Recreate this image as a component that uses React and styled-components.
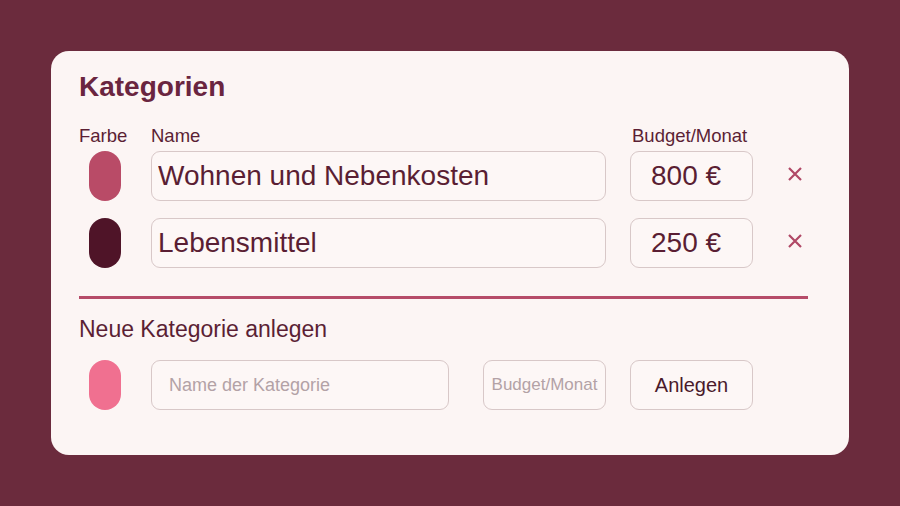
import React from "react";
import styled, { createGlobalStyle } from "styled-components";

const GlobalStyle = createGlobalStyle`
  html, body {
    margin: 0;
    padding: 0;
    background: #6b2b3d;
  }
  body {
    font-family: "Liberation Sans", Arial, sans-serif;
  }
  * { box-sizing: border-box; }
`;

const Page = styled.div`
  width: 900px;
  height: 506px;
  padding: 51px;
  background: #6b2b3d;
`;

const Card = styled.section`
  width: 798px;
  height: 404px;
  background: #fcf5f4;
  border-radius: 18px;
  padding: 20px 41px 0 28px;
  color: #5b1f34;
`;

const Title = styled.h1`
  margin: 0;
  font-size: 28px;
  line-height: 32px;
  font-weight: 700;
  color: #6a2540;
`;

const Grid = styled.div`
  display: grid;
  grid-template-columns: 48px 455px 123px 1fr;
  column-gap: 24px;
  align-items: center;
  margin-top: 22px;
`;

const Label = styled.div`
  font-size: 18.5px;
  line-height: 22px;
  color: #5b1f34;
  margin-bottom: 4px;
  padding-left: ${(p) => p.$indent || 0}px;
  white-space: nowrap;
`;

const RowGap = styled.div`
  grid-column: 1 / -1;
  height: 17px;
`;

const Swatch = styled.div`
  width: 32px;
  height: 50px;
  border-radius: 16px;
  margin-left: 10px;
  flex: none;
  background: ${(p) => p.$color};
`;

const Field = styled.input`
  display: block;
  width: ${(p) => p.$width || "100%"};
  height: 50px;
  border: 1px solid #d8c8c8;
  border-radius: 9px;
  background: #fdf7f6;
  color: #5a1e33;
  font-family: "Liberation Sans", Arial, sans-serif;
  font-size: ${(p) => p.$size || "28px"};
  padding: ${(p) => p.$pad || "0 6px"};
  text-align: ${(p) => p.$align || "left"};
  outline: none;
  &::placeholder {
    color: #b3a2a6;
  }
`;

const Remove = styled.button`
  justify-self: start;
  margin: 0 0 5px 9px;
  width: 18px;
  height: 18px;
  padding: 0;
  border: none;
  background: transparent;
  display: flex;
  align-items: center;
  justify-content: center;
  cursor: pointer;
`;

const Divider = styled.hr`
  margin: 28px 0 0;
  border: none;
  height: 3px;
  background: #b64c69;
`;

const SubTitle = styled.h2`
  margin: 17px 0 0;
  font-size: 23px;
  line-height: 26px;
  font-weight: 400;
  color: #5b1f34;
`;

const NewRow = styled.div`
  display: flex;
  align-items: center;
  margin-top: 18px;
`;

const Button = styled.button`
  width: 123px;
  height: 50px;
  margin-left: 24px;
  border: 1px solid #d8c8c8;
  border-radius: 9px;
  background: #fdf7f6;
  color: #4a1a2b;
  font-family: "Liberation Sans", Arial, sans-serif;
  font-size: 20px;
  cursor: pointer;
`;

const Gap = styled.div`
  width: ${(p) => p.$w}px;
  flex: none;
`;

const Cross = () => (
  <svg width="16" height="16" viewBox="0 0 16 16">
    <path d="M2 2 L14 14 M14 2 L2 14" stroke="#b04866" strokeWidth="2.2" strokeLinecap="butt" />
  </svg>
);

const categories = [
  { color: "#b94b67", name: "Wohnen und Nebenkosten", budget: "800 €" },
  { color: "#4f1428", name: "Lebensmittel", budget: "250 €" },
];

export default function App() {
  return (
    <>
      <GlobalStyle />
      <Page>
        <Card>
          <Title>Kategorien</Title>
          <Grid>
            <Label>Farbe</Label>
            <Label>Name</Label>
            <Label $indent={2}>Budget/Monat</Label>
            <div />
            {categories.map((c, i) => (
              <React.Fragment key={c.name}>
                {i > 0 && <RowGap />}
                <Swatch $color={c.color} />
                <Field readOnly value={c.name} />
                <Field readOnly value={c.budget} $pad="0 0 0 20px" />
                <Remove aria-label="Entfernen">
                  <Cross />
                </Remove>
              </React.Fragment>
            ))}
          </Grid>
          <Divider />
          <SubTitle>Neue Kategorie anlegen</SubTitle>
          <NewRow>
            <Swatch $color="#f07090" />
            <Gap $w={30} />
            <Field $width="298px" placeholder="Name der Kategorie" $size="18px" $pad="0 0 0 17px" />
            <Gap $w={34} />
            <Field $width="123px" placeholder="Budget/Monat" $size="17px" $pad="0 4px" $align="center" />
            <Button>Anlegen</Button>
          </NewRow>
        </Card>
      </Page>
    </>
  );
}
